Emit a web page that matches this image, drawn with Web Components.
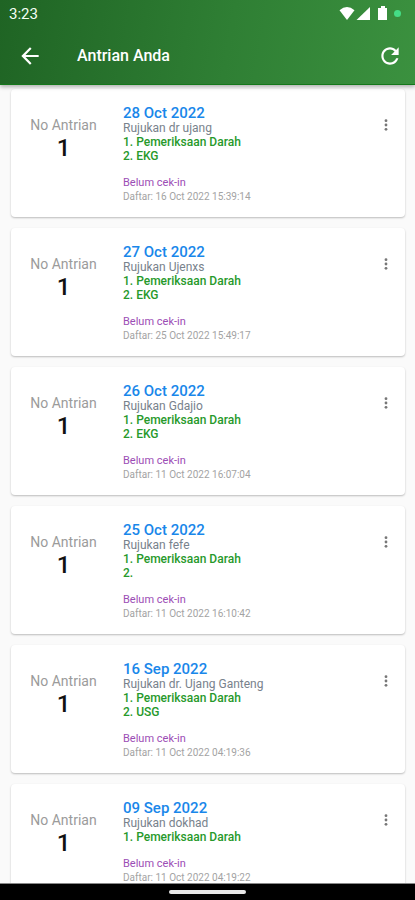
<!DOCTYPE html>
<html lang="id">
<head>
<meta charset="utf-8">
<meta name="viewport" content="width=device-width, initial-scale=1">
<title>Antrian Anda</title>
<style>
html, body { margin: 0; height: 100%; }
body { font-family: Roboto, "Liberation Sans", sans-serif; background: #fafafa; }
</style>
</head>
<body>
<queue-app></queue-app>

<template id="t-status">
<style>
:host { display: flex; align-items: center; justify-content: space-between; height: 28px; padding: 0 14px 0 9px; color: #f4fff4; }
time { font-size: 15px; line-height: 28px; }
svg { display: block; }
</style>
<time>3:23</time>
<svg width="62" height="16" viewBox="0 0 62 16" fill="#fff" aria-hidden="true">
<path d="M.5 4.300Q8-2.500 15.500 4.300L8 14z"/>
<path d="M31 1v13H17.500z"/>
<path d="M40 2h2V0h4v2h2v12h-9V2z"/>
<circle cx="58.500" cy="7.500" r="3.500" fill="#45dd86"/>
</svg>
</template>

<template id="t-header">
<style>
:host { display: block; position: relative; z-index: 1; flex: none; background: linear-gradient(100deg, #1f6424, #2f7f34 55%, #3b913f); border-bottom: 1px solid #14781a; box-shadow: 0 2px 4px rgba(0,0,0,.3); color: #fff; }
.bar { display: flex; align-items: center; height: 56px; padding: 0 9px 0 14px; }
h1 { flex: 1; margin: 0 0 0 31px; font-size: 16px; line-height: 20px; font-weight: 500; }
button { display: grid; place-items: center; width: 32px; height: 32px; padding: 0; border: 0; background: none; color: inherit; }
svg { display: block; fill: currentColor; }
</style>
<status-bar></status-bar>
<div class="bar">
<button aria-label="Kembali"><svg width="26" height="26" viewBox="0 0 24 24"><path d="M20 11H7.830l5.590-5.590L12 4l-8 8 8 8 1.410-1.410L7.830 13H20v-2z"/></svg></button>
<h1><slot></slot></h1>
<button aria-label="Muat ulang"><svg width="26" height="26" viewBox="0 0 24 24"><path d="M17.650 6.350C16.200 4.900 14.210 4 12 4c-4.420 0-7.990 3.580-7.990 8s3.570 8 7.990 8c3.730 0 6.840-2.550 7.730-6h-2.080c-.82 2.330-3.040 4-5.650 4-3.310 0-6-2.690-6-6s2.690-6 6-6c1.660 0 3.140.69 4.220 1.780L13 11h7V4l-2.350 2.350z"/></svg></button>
</div>
</template>

<template id="t-card">
<style>
:host { display: flex; align-items: flex-start; padding: 15px 7px 14px 0; border-radius: 4px; background: #fff; box-shadow: 0 1px 2px rgba(0,0,0,.25); }
.number { width: 105px; margin: 13px 7px 0 0; text-align: center; }
.label { font-size: 14px; line-height: 16px; color: #9b9b9b; }
.value { font-size: 24px; line-height: 30px; font-weight: 500; color: #111; }
.info { flex: 1; font-size: 11px; line-height: 13px; }
h2 { margin: 0; font-size: 15px; line-height: 18px; font-weight: 500; color: #1987ea; }
.ref { font-size: 12px; color: #78828c; }
ol { margin: 0 0 13px; padding: 0; list-style: none; font-size: 12px; line-height: 14px; font-weight: 500; color: #27992b; }
.state { line-height: 14px; color: #9c4db5; }
.date { font-size: 10px; color: #a3a3a3; }
button { display: grid; place-items: center; width: 24px; height: 24px; margin-top: 9px; padding: 0; border: 0; background: none; color: #777; }
svg { display: block; fill: currentColor; }
</style>
<div class="number"><div class="label">No Antrian</div><div class="value"></div></div>
<div class="info">
<h2><slot name="day"></slot></h2>
<div class="ref"><slot name="ref"></slot></div>
<ol></ol>
<div class="state">Belum cek-in</div>
<div class="date">Daftar: <slot name="registered"></slot></div>
</div>
<button aria-label="Menu"><svg width="4" height="12" viewBox="0 0 4 12"><circle cx="2" cy="1.700" r="1.400"/><circle cx="2" cy="6" r="1.400"/><circle cx="2" cy="10.300" r="1.400"/></svg></button>
</template>

<template id="t-nav">
<style>
:host { display: grid; place-items: center; flex: none; height: 16px; background: #000; border-top: 1px solid #888; position: relative; z-index: 1; }
span { width: 77px; height: 4px; border-radius: 2px; background: #e8e8e8; }
</style>
<span></span>
</template>

<template id="t-app">
<style>
:host { display: flex; flex-direction: column; height: 100vh; overflow: hidden; }
main { flex: 1; min-height: 0; overflow-y: auto; scrollbar-width: none; display: flex; flex-direction: column; gap: 11px; padding: 4px 10px 10px 11px; }
queue-card { flex: none; }
</style>
<app-header>Antrian Anda</app-header>
<main></main>
<gesture-bar></gesture-bar>
</template>

<script>
class Base extends HTMLElement {
  constructor() {
    super();
    this.attachShadow({ mode: "open" }).append(
      document.getElementById(this.constructor.template).content.cloneNode(true));
  }
}
class StatusBar extends Base { static template = "t-status"; }
class AppHeader extends Base { static template = "t-header"; }
class GestureBar extends Base { static template = "t-nav"; }
class QueueCard extends Base {
  static template = "t-card";
  connectedCallback() {
    this.shadowRoot.querySelector(".value").textContent = this.getAttribute("number");
    const list = this.shadowRoot.querySelector("ol");
    list.replaceChildren(...this.getAttribute("services").split("|").map((name, i) => {
      const li = document.createElement("li");
      li.textContent = `${i + 1}. ${name}`;
      return li;
    }));
  }
}
const entries = [
  ["28 Oct 2022", "Rujukan dr ujang", "Pemeriksaan Darah|EKG", "16 Oct 2022 15:39:14"],
  ["27 Oct 2022", "Rujukan Ujenxs", "Pemeriksaan Darah|EKG", "25 Oct 2022 15:49:17"],
  ["26 Oct 2022", "Rujukan Gdajio", "Pemeriksaan Darah|EKG", "11 Oct 2022 16:07:04"],
  ["25 Oct 2022", "Rujukan fefe", "Pemeriksaan Darah|", "11 Oct 2022 16:10:42"],
  ["16 Sep 2022", "Rujukan dr. Ujang Ganteng", "Pemeriksaan Darah|USG", "11 Oct 2022 04:19:36"],
  ["09 Sep 2022", "Rujukan dokhad", "Pemeriksaan Darah", "11 Oct 2022 04:19:22"]
];
class QueueApp extends Base {
  static template = "t-app";
  connectedCallback() {
    this.shadowRoot.querySelector("main").replaceChildren(...entries.map(([day, ref, services, registered]) => {
      const card = document.createElement("queue-card");
      card.setAttribute("number", "1");
      card.setAttribute("services", services);
      for (const [slot, text] of Object.entries({ day, ref, registered })) {
        const span = document.createElement("span");
        span.slot = slot;
        span.textContent = text;
        card.append(span);
      }
      return card;
    }));
  }
}
customElements.define("status-bar", StatusBar);
customElements.define("app-header", AppHeader);
customElements.define("gesture-bar", GestureBar);
customElements.define("queue-card", QueueCard);
customElements.define("queue-app", QueueApp);
</script>
</body>
</html>
